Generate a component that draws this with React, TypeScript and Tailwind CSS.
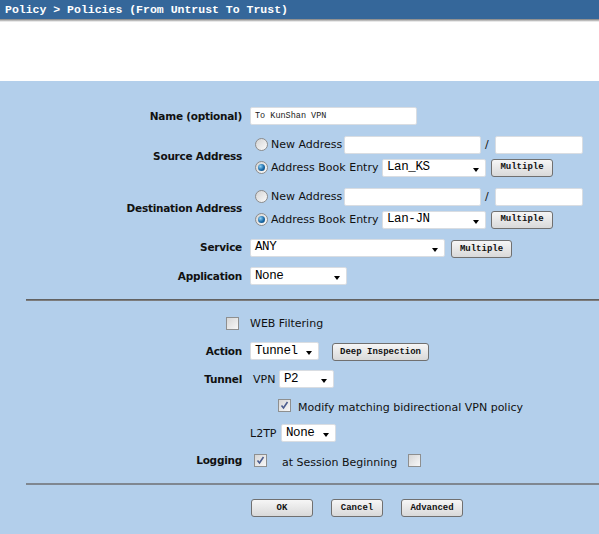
import React from "react";

const mono = "font-['Liberation_Mono',monospace]";

function Radio({ checked }: { checked?: boolean }) {
  return (
    <span className="relative inline-flex h-[13px] w-[13px] shrink-0 items-center justify-center rounded-full border border-[#8c8c8c] bg-gradient-to-br from-[#d4d4d4] to-[#fbfbfb]">
      {checked && (
        <span className="h-[7px] w-[7px] rounded-full bg-[radial-gradient(circle_at_35%_35%,#8fd0f5,#1a6aa8_55%,#0d3f6e)]" />
      )}
    </span>
  );
}

function Check({ checked }: { checked?: boolean }) {
  return (
    <span className="inline-flex h-[13px] w-[13px] shrink-0 items-center justify-center border border-[#8e8f8f] bg-gradient-to-br from-[#d6d6d6] to-[#f8f8f8]">
      {checked && (
        <svg width="9" height="9" viewBox="0 0 9 9">
          <path d="M1.5 4.5 L3.5 7 L7.5 1" fill="none" stroke="#4b5d8f" strokeWidth="1.6" />
        </svg>
      )}
    </span>
  );
}

function TextBox({ w, value }: { w: string; value?: string }) {
  return (
    <span
      className={`inline-flex h-[18px] ${w} items-center rounded-[2px] border border-[#d9dde2] bg-white pl-[4px] text-[8.5px] text-[#222] ${mono}`}
    >
      {value}
    </span>
  );
}

function Select({ w, value }: { w: string; value: string }) {
  return (
    <span
      className={`relative inline-flex h-[18px] ${w} items-center rounded-[2px] border border-[#d9dde2] bg-white pl-[4px] text-[12.5px] tracking-[-0.4px] text-black ${mono}`}
    >
      {value}
      <span className="absolute right-[6px] top-[8px] h-0 w-0 border-x-[3.5px] border-t-[4px] border-x-transparent border-t-black" />
    </span>
  );
}

function Btn({ w, children }: { w: string; children: React.ReactNode }) {
  return (
    <span
      className={`inline-flex h-[18px] ${w} items-center justify-center rounded-[3px] border border-[#707070] bg-gradient-to-b from-[#f6f6f6] to-[#d9d9d9] text-[9px] font-bold text-[#111] ${mono}`}
    >
      {children}
    </span>
  );
}

function Label({ children }: { children?: React.ReactNode }) {
  return (
    <div className="w-[242px] shrink-0 text-right text-[10.5px] font-bold tracking-[-0.25px]">{children}</div>
  );
}

export default function App() {
  return (
    <div className="h-[534px] w-[599px] overflow-hidden bg-[#b3cfeb] font-['DejaVu_Sans',sans-serif] text-[11px] leading-none text-[#111]">
      {/* title bar */}
      <div className={`h-[19px] bg-[#35679a] pl-[5px] text-[11.5px] font-bold leading-[19px] text-white ${mono}`}>
        Policy &gt; Policies (From Untrust To Trust)
      </div>
      <div className="h-[3px] bg-gradient-to-b from-[#7d7d7d] to-white" />
      <div className="h-[59px] bg-white" />

      <div className="flex flex-col pt-[24px]">
        {/* Name */}
        <div className="flex h-[22px] items-center">
          <Label>Name (optional)</Label>
          <div className="pl-[8px]">
            <TextBox w="w-[167px]" value="To KunShan VPN" />
          </div>
        </div>

        {/* Source */}
        <div className="mt-[6px] flex h-[46px] items-center">
          <Label>Source Address</Label>
          <div className="flex flex-col pl-[13px]">
            <div className="flex h-[23px] items-center">
              <Radio />
              <span className="w-[76px] pl-[3px]">New Address</span>
              <TextBox w="w-[137px]" />
              <span className="w-[14px] pl-[4px]">/</span>
              <TextBox w="w-[88px]" />
            </div>
            <div className="flex h-[23px] items-center">
              <Radio checked />
              <span className="w-[114px] pl-[3px]">Address Book Entry</span>
              <Select w="w-[104px]" value="Lan_KS" />
              <span className="pl-[5px]">
                <Btn w="w-[62px]">Multiple</Btn>
              </span>
            </div>
          </div>
        </div>

        {/* Destination */}
        <div className="mt-[6px] flex h-[46px] items-center">
          <Label>Destination Address</Label>
          <div className="flex flex-col pl-[13px]">
            <div className="flex h-[23px] items-center">
              <Radio />
              <span className="w-[76px] pl-[3px]">New Address</span>
              <TextBox w="w-[137px]" />
              <span className="w-[14px] pl-[4px]">/</span>
              <TextBox w="w-[88px]" />
            </div>
            <div className="flex h-[23px] items-center">
              <Radio checked />
              <span className="w-[114px] pl-[3px]">Address Book Entry</span>
              <Select w="w-[104px]" value="Lan-JN" />
              <span className="pl-[5px]">
                <Btn w="w-[62px]">Multiple</Btn>
              </span>
            </div>
          </div>
        </div>

        {/* Service */}
        <div className="mt-[5px] flex h-[23px] items-center">
          <Label>Service</Label>
          <div className="flex items-center pl-[8px]">
            <Select w="w-[195px]" value="ANY" />
            <span className="pl-[6px] pt-[3px]">
              <Btn w="w-[61px]">Multiple</Btn>
            </span>
          </div>
        </div>

        {/* Application */}
        <div className="mt-[5px] flex h-[24px] items-center">
          <Label>Application</Label>
          <div className="pl-[8px]">
            <Select w="w-[97px]" value="None" />
          </div>
        </div>

        <div className="ml-[26px] mt-[11px] h-[2px] bg-gradient-to-b from-[#555] to-[#8a8a8a]" />

        {/* WEB Filtering */}
        <div className="mt-[11px] flex h-[22px] items-center">
          <div className="flex w-[250px] shrink-0 justify-end pr-[11px]">
            <Check />
          </div>
          <span>WEB Filtering</span>
        </div>

        {/* Action */}
        <div className="mt-[6px] flex h-[22px] items-center">
          <Label>Action</Label>
          <div className="flex items-center pl-[8px]">
            <Select w="w-[69px]" value="Tunnel" />
            <span className="pl-[13px] pt-[2px]">
              <Btn w="w-[97px]">Deep Inspection</Btn>
            </span>
          </div>
        </div>

        {/* Tunnel */}
        <div className="mt-[6px] flex h-[22px] items-center">
          <Label>Tunnel</Label>
          <div className="flex items-center pl-[11px]">
            <span className="w-[26px]">VPN</span>
            <Select w="w-[55px]" value="P2" />
          </div>
        </div>

        {/* Modify bidirectional */}
        <div className="mt-[4px] flex h-[22px] items-center pl-[278px]">
          <Check checked />
          <span className="pl-[7px] pt-[5px]">Modify matching bidirectional VPN policy</span>
        </div>

        {/* L2TP */}
        <div className="mt-[6px] flex h-[22px] items-center pl-[250px]">
          <span className="w-[31px]">L2TP</span>
          <Select w="w-[55px]" value="None" />
        </div>

        {/* Logging */}
        <div className="mt-[5px] flex h-[22px] items-center">
          <Label>Logging</Label>
          <div className="flex items-center pl-[12px]">
            <Check checked />
            <span className="w-[141px] pl-[15px] pt-[4px]">at Session Beginning</span>
            <Check />
          </div>
        </div>

        <div className="ml-[26px] mt-[12px] h-[2px] bg-[#7f8790]" />

        {/* Buttons */}
        <div className="mt-[12px] flex h-[22px] items-center pl-[251px]">
          <Btn w="w-[62px]">OK</Btn>
          <span className="pl-[18px]">
            <Btn w="w-[52px]">Cancel</Btn>
          </span>
          <span className="pl-[18px]">
            <Btn w="w-[62px]">Advanced</Btn>
          </span>
        </div>
      </div>
    </div>
  );
}
